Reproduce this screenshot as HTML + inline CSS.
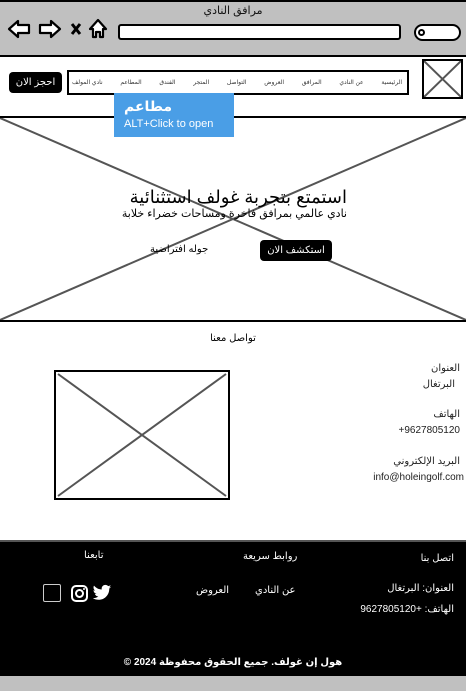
<!DOCTYPE html>
<html><head><meta charset="utf-8"><style>
*{margin:0;padding:0;box-sizing:border-box}
body{width:466px;height:691px;position:relative;overflow:hidden;background:#fff;font-family:"Liberation Sans","DejaVu Sans",sans-serif;}
.a{position:absolute;white-space:nowrap}
.r{direction:rtl}
</style></head><body>
<div class="a" style="left:0;top:0;width:466px;height:57px;background:#c0c0c0;border-top:2px solid #000;border-bottom:2px solid #000"></div>
<div class="a r" style="left:0;width:466px;top:4px;text-align:center;font-size:11px;color:#111">مرافق النادي</div>
<svg class="a" style="left:0;top:10px" width="120" height="40" viewBox="0 0 120 40">
<path d="M9,19 L18,11 L18,15 L29,15 L29,23 L18,23 L18,27 Z" fill="#fff" stroke="#000" stroke-width="2.2" stroke-linejoin="round"/>
<path d="M60,19 L51,11 L51,15 L40,15 L40,23 L51,23 L51,27 Z" fill="#fff" stroke="#000" stroke-width="2.2" stroke-linejoin="round"/>
<path d="M72,14 L80,24 M80,14 L72,24" stroke="#000" stroke-width="3"/>
<path d="M98,10 L106,19 L103,19 L103,27 L100,27 L100,22 L96,22 L96,27 L93,27 L93,19 L90,19 Z" fill="#fff" stroke="#000" stroke-width="2.2" stroke-linejoin="round"/>
</svg>
<div class="a" style="left:118px;top:24px;width:283px;height:16px;background:#fff;border:2px solid #000;border-radius:3px"></div>
<div class="a" style="left:414px;top:24px;width:47px;height:17px;background:#fff;border:2px solid #000;border-radius:9px"></div>
<div class="a" style="left:418px;top:29px;width:7px;height:7px;border:2px solid #000;border-radius:50%"></div>
<div class="a" style="left:422px;top:59px;width:41px;height:40px;border:2px solid #000"></div>
<svg class="a" style="left:424px;top:61px" width="37" height="36"><path d="M0,0L37,36M37,0L0,36" stroke="#555" stroke-width="2"/></svg>
<div class="a" style="left:67px;top:70px;width:342px;height:25px;border:2px solid #000"></div>
<div class="a r" style="left:72px;top:79px;width:330px;font-size:6px;color:#333;display:flex;justify-content:space-between;direction:rtl">
<span>الرئيسية</span><span>عن النادي</span><span>المرافق</span><span>العروض</span><span>التواصل</span><span>المتجر</span><span>الفندق</span><span>المطاعم</span><span>نادي المولف</span></div>
<div class="a r" style="left:9px;top:72px;width:53px;height:21px;background:#000;border-radius:4px;color:#fff;font-size:10px;text-align:center;line-height:21px">احجز الان</div>
<div class="a" style="left:0;top:116px;width:466px;height:206px;border-top:2px solid #000;border-bottom:2px solid #000"></div>
<svg class="a" style="left:0;top:118px" width="466" height="202"><path d="M0,0L466,202M466,0L0,202" stroke="#555" stroke-width="2"/></svg>
<div class="a" style="left:114px;top:93px;width:120px;height:44px;background:#4a9ee6;color:#fff;padding-left:10px">
<div class="r" style="font-size:14px;font-weight:bold;line-height:20px;margin-top:3px;text-align:left;direction:ltr">مطاعم</div>
<div style="font-size:11px;line-height:16px">ALT+Click to open</div></div>
<div class="a r" style="right:119px;top:187px;font-size:18px;color:#000">استمتع بتجربة غولف استثنائية</div>
<div class="a r" style="right:119px;top:207px;font-size:11px;color:#000">نادي عالمي بمرافق فاخرة ومساحات خضراء خلابة</div>
<div class="a r" style="left:260px;top:240px;width:72px;height:21px;background:#000;border-radius:4px;color:#fff;font-size:10px;text-align:center;line-height:21px">استكشف الان</div>
<div class="a r" style="left:150px;top:244px;font-size:10px;color:#000">جوله افتراضية</div>
<div class="a r" style="left:0;width:466px;top:333px;text-align:center;font-size:10px">تواصل معنا</div>
<div class="a" style="left:54px;top:370px;width:176px;height:130px;border:2px solid #000"></div>
<svg class="a" style="left:56px;top:372px" width="172" height="126"><path d="M2,2L170,124M170,2L2,124" stroke="#555" stroke-width="2"/></svg>
<div class="a r" style="right:6px;top:363px;font-size:10px;color:#222">العنوان</div>
<div class="a r" style="right:11px;top:379px;font-size:10px;color:#222">البرتغال</div>
<div class="a r" style="right:6px;top:409px;font-size:10px;color:#222">الهاتف</div>
<div class="a" style="right:6px;top:425px;font-size:10px;color:#222">+9627805120</div>
<div class="a r" style="right:6px;top:456px;font-size:10px;color:#222">البريد الإلكتروني</div>
<div class="a" style="right:2px;top:472px;font-size:10px;color:#222">info@holeingolf.com</div>
<div class="a" style="left:0;top:540px;width:466px;height:136px;background:#000;border-top:2px solid #555"></div>
<div class="a r" style="right:12px;top:553px;font-size:10px;color:#fff">اتصل بنا</div>
<div class="a r" style="left:243px;top:551px;font-size:10px;color:#fff">روابط سريعة</div>
<div class="a r" style="left:84px;top:550px;font-size:10px;color:#fff">تابعنا</div>
<div class="a r" style="right:12px;top:583px;font-size:10px;color:#fff">العنوان: البرتغال</div>
<div class="a r" style="right:12px;top:604px;font-size:10px;color:#fff">الهاتف: +9627805120</div>
<div class="a r" style="left:255px;top:585px;font-size:10px;color:#fff">عن النادي</div>
<div class="a r" style="left:196px;top:585px;font-size:10px;color:#fff">العروض</div>
<div class="a" style="left:43px;top:584px;width:18px;height:18px;border:1.5px solid #ccc;border-radius:2px"></div>
<svg class="a" style="left:70px;top:584px" width="20" height="20"><rect x="2" y="2" width="15" height="15" rx="4" fill="none" stroke="#fff" stroke-width="2"/><circle cx="9.5" cy="9.5" r="3.5" fill="none" stroke="#fff" stroke-width="2"/><circle cx="14" cy="5" r="1" fill="#fff"/></svg>
<svg class="a" style="left:92px;top:584px" width="20" height="18" viewBox="0 0 24 20"><path d="M23,2.5c-.8.4-1.7.6-2.6.7.9-.6 1.6-1.4 2-2.5-.9.5-1.9.9-2.9 1.1C18.6.9 17.4.3 16.1.3c-2.5 0-4.5 2-4.5 4.5 0 .4 0 .7.1 1C7.9 5.6 4.6 3.8 2.4 1.1c-.4.7-.6 1.4-.6 2.3 0 1.6.8 2.9 2 3.7-.7 0-1.4-.2-2-.6v.1c0 2.2 1.6 4 3.6 4.4-.4.1-.8.2-1.2.2-.3 0-.6 0-.8-.1.6 1.8 2.2 3.1 4.2 3.1-1.5 1.2-3.5 1.9-5.6 1.9H1c2 1.3 4.4 2 6.9 2 8.3 0 12.8-6.9 12.8-12.8v-.6c.9-.6 1.7-1.4 2.3-2.3z" fill="#fff"/></svg>
<div class="a r" style="left:0;width:466px;top:657px;text-align:center;font-size:10px;color:#fff;font-weight:bold">هول إن غولف. جميع الحقوق محفوظة 2024 ©</div>
<div class="a" style="left:0;top:676px;width:466px;height:15px;background:#c0c0c0"></div>
</body></html>
